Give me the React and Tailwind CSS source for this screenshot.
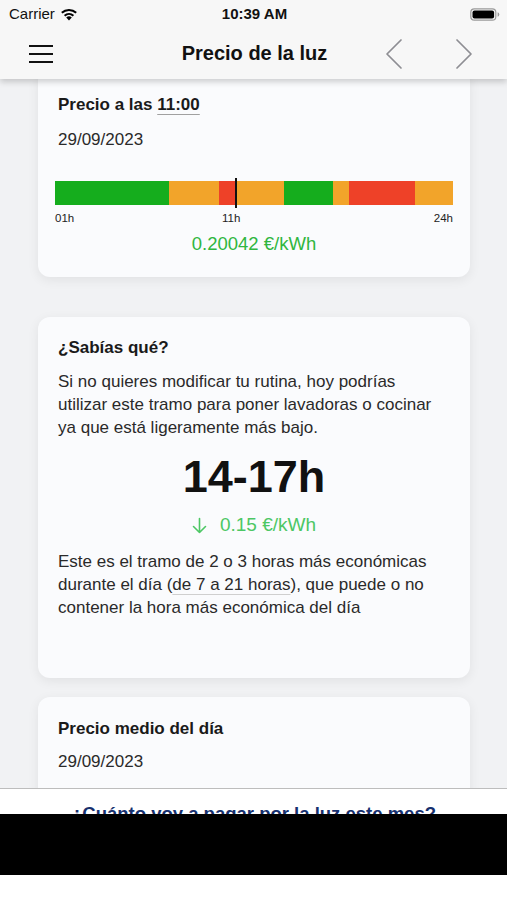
import React from "react";

const font = { fontFamily: '"Liberation Sans", Arial, Helvetica, sans-serif' };

function Wifi() {
  return (
    <svg width="18" height="13" viewBox="0 0 18 13">
      <path d="M9 12.5 L6.2 9.4 A4.2 4.2 0 0 1 11.8 9.4 Z" fill="#000" />
      <path d="M3.9 6.9 A7.6 7.6 0 0 1 14.1 6.9 L12.7 8.4 A5.6 5.6 0 0 0 5.3 8.4 Z" fill="#000" />
      <path d="M1.1 4.1 A11.6 11.6 0 0 1 16.9 4.1 L15.5 5.6 A9.6 9.6 0 0 0 2.5 5.6 Z" fill="#000" />
    </svg>
  );
}

function Battery() {
  return (
    <svg width="30" height="13" viewBox="0 0 30 13">
      <rect x="0.8" y="0.8" width="25" height="11.4" rx="3.5" fill="none" stroke="#9a9a9a" strokeWidth="1.2" />
      <rect x="2.5" y="2.5" width="21.6" height="8" rx="2" fill="#000" />
      <path d="M27.6 4.3 Q29.3 4.8 29.3 6.5 Q29.3 8.2 27.6 8.7 Z" fill="#9a9a9a" />
    </svg>
  );
}

function Chevron({ dir }) {
  return (
    <svg width="20" height="32" viewBox="0 0 20 32">
      {dir === "left" ? (
        <path d="M17 2 L3 16 L17 30" fill="none" stroke="#8e8e93" strokeWidth="1.7" strokeLinecap="round" strokeLinejoin="round" />
      ) : (
        <path d="M3 2 L17 16 L3 30" fill="none" stroke="#8e8e93" strokeWidth="1.7" strokeLinecap="round" strokeLinejoin="round" />
      )}
    </svg>
  );
}

function ArrowDown() {
  return (
    <svg width="15" height="17" viewBox="0 0 15 17">
      <path d="M7.5 1.5 V15.5 M1.5 9.5 L7.5 15.5 L13.5 9.5" fill="none" stroke="#4cc764" strokeWidth="1.6" strokeLinecap="round" strokeLinejoin="round" />
    </svg>
  );
}

export default function App() {
  return (
    <div style={font} className="w-[507px] h-[900px] flex flex-col bg-[#f1f2f4] overflow-hidden">
      {/* Header */}
      <div className="relative z-10 bg-[#f7f7f7] shadow-[0_3px_6px_rgba(0,0,0,0.18)]">
        <div className="h-[28px] flex items-center justify-between pl-[9px] pr-[7px]">
          <div className="flex items-center gap-[5px] w-[120px]">
            <span className="text-[15px] text-[#111]">Carrier</span>
            <Wifi />
          </div>
          <span className="text-[15px] font-bold text-[#111]">10:39 AM</span>
          <div className="w-[120px] flex justify-end">
            <Battery />
          </div>
        </div>
        <div className="h-[51px] flex items-center pl-[29px] pr-[33px]">
          <div className="w-[24px] flex flex-col gap-[6px]">
            <div className="h-[2px] bg-[#111]" />
            <div className="h-[2px] bg-[#111]" />
            <div className="h-[2px] bg-[#111]" />
          </div>
          <div className="flex-1 text-center text-[20px] font-bold text-[#111] pl-[72px] pb-[1px]">Precio de la luz</div>
          <div className="flex items-center gap-[50px]">
            <Chevron dir="left" />
            <Chevron dir="right" />
          </div>
        </div>
      </div>

      {/* Scroll area */}
      <div className="flex-1 overflow-hidden">
        <div className="ml-[38px] mr-[37px] -mt-[10px] flex flex-col">
          {/* Card 1 */}
          <div className="rounded-[12px] bg-[#fafbfd] shadow-[0_3px_12px_rgba(0,0,0,0.07)] px-[17px] pt-[26px] pb-[22px]">
            <div className="pl-[3px] text-[17px] font-bold text-[#1a1a1a] leading-[20px]">
              Precio a las <span className="underline decoration-[#a0a0a0] decoration-1 underline-offset-[4px]">11:00</span>
            </div>
            <div className="pl-[3px] mt-[15px] text-[17px] text-[#2a2a2a] leading-[20px]">29/09/2023</div>
            <div className="relative mt-[31px] h-[24px] flex">
              <div className="w-[114px] bg-[#15ad1d]" />
              <div className="w-[50px] bg-[#f2a42a]" />
              <div className="w-[17px] bg-[#ee4128]" />
              <div className="w-[48px] bg-[#f2a42a]" />
              <div className="w-[49px] bg-[#15ad1d]" />
              <div className="w-[16px] bg-[#f2a42a]" />
              <div className="w-[66px] bg-[#ee4128]" />
              <div className="flex-1 bg-[#f2a42a]" />
              <div className="absolute left-[180px] -top-[3px] w-[2px] h-[30px] bg-[#111]" />
            </div>
            <div className="relative mt-[6px] h-[14px] text-[11.5px] leading-[14px] text-[#222] flex justify-between">
              <span>01h</span>
              <span className="absolute left-[167px] top-0">11h</span>
              <span>24h</span>
            </div>
            <div className="mt-[8px] text-center text-[18.5px] leading-[22px] text-[#2fb63f]">0.20042 €/kWh</div>
          </div>

          {/* Card 2 */}
          <div className="mt-[40px] rounded-[12px] bg-[#fafbfd] shadow-[0_3px_12px_rgba(0,0,0,0.07)] px-[20px] pt-[21px] pb-[59px]">
            <div className="text-[17px] font-bold text-[#1a1a1a] leading-[20px]">¿Sabías qué?</div>
            <p className="mt-[12px] text-[17px] leading-[23px] text-[#2a2a2a]">
              Si no quieres modificar tu rutina, hoy podrías<br />
              utilizar este tramo para poner lavadoras o cocinar<br />
              ya que está ligeramente más bajo.
            </p>
            <div className="mt-[13px] text-center text-[45px] font-bold leading-[50px] text-[#111]">14-17h</div>
            <div className="mt-[12px] flex items-center justify-center gap-[13px] text-[19px] leading-[22px] text-[#4cc764]">
              <ArrowDown />
              <span>0.15 €/kWh</span>
            </div>
            <p className="mt-[14px] text-[17px] leading-[23px] text-[#2a2a2a]">
              Este es el tramo de 2 o 3 horas más económicas<br />
              durante el día (<span className="underline decoration-[#cfcfcf] decoration-1 underline-offset-[4px]">de 7 a 21 horas</span>), que puede o no<br />
              contener la hora más económica del día
            </p>
          </div>

          {/* Card 3 */}
          <div className="mt-[19px] rounded-[12px] bg-[#fafbfd] shadow-[0_3px_12px_rgba(0,0,0,0.07)] px-[20px] pt-[22px] pb-[40px]">
            <div className="text-[17px] font-bold text-[#1a1a1a] leading-[20px]">Precio medio del día</div>
            <div className="mt-[13px] text-[17px] text-[#2a2a2a] leading-[20px]">29/09/2023</div>
          </div>
        </div>
      </div>

      {/* Footer */}
      <div className="h-[112px] shrink-0 flex flex-col bg-white">
        <div className="h-[1px] bg-[#bdbdbd]" />
        <div className="h-[25px] overflow-hidden pt-[14px] text-center text-[18.5px] font-bold leading-[22px] text-[#16306e]">
          ¿Cuánto voy a pagar por la luz este mes?
        </div>
        <div className="h-[61px] bg-black" />
        <div className="flex-1 bg-white" />
      </div>
    </div>
  );
}
